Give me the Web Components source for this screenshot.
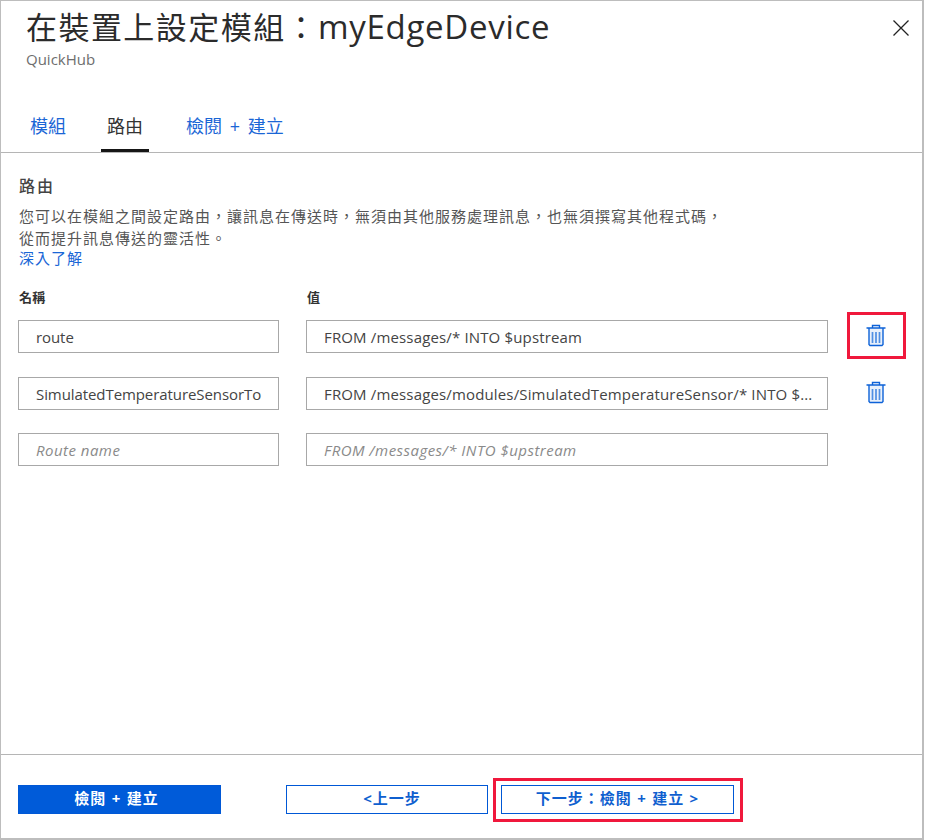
<!DOCTYPE html>
<html lang="zh-Hant"><head><meta charset="utf-8"><title>路由</title>
<style>
html,body{margin:0;padding:0;background:#fff}
body{font-family:"Open Sans","Noto Sans CJK TC",sans-serif;color:#333}
</style></head><body>
<route-panel>
  <panel-header slot="header" heading="在裝置上設定模組：myEdgeDevice" sub="QuickHub"></panel-header>
  <tab-bar slot="tabs">
    <tab-item>模組</tab-item><tab-item active>路由</tab-item><tab-item>檢閱 + 建立</tab-item>
  </tab-bar>
  <route-intro></route-intro>
  <route-table>
    <route-row name="route" value="FROM /messages/* INTO $upstream" highlight></route-row>
    <route-row name="SimulatedTemperatureSensorTo" value="FROM /messages/modules/SimulatedTemperatureSensor/* INTO $..."></route-row>
    <route-row name-ph="Route name" value-ph="FROM /messages/* INTO $upstream" empty></route-row>
  </route-table>
  <panel-footer slot="footer">
    <action-button kind="primary" w="203" style="padding-right:6px">檢閱 + 建立</action-button>
    <action-button w="202" style="margin-left:65px;padding-left:10px">&lt;上一步</action-button>
    <action-button w="233" highlight style="margin-left:13px">下一步：檢閱 + 建立 &gt;</action-button>
  </panel-footer>
</route-panel>
<script>
function def(name, html, init){
  customElements.define(name, class extends HTMLElement{
    connectedCallback(){
      if(this.shadowRoot) return;
      const r=this.attachShadow({mode:'open'});
      r.innerHTML=html;
      if(init) init(this,r);
    }
  });
}
const stack='"Open Sans","Noto Sans CJK TC",sans-serif';
def('route-panel',`<style>
:host{display:flex;flex-direction:column;box-sizing:border-box;width:924px;height:840px;border:1px solid #bdbdbd;border-width:1px 1px 2px 1px;border-right-width:2px;background:#fff;font-family:${stack}}
.body{flex:1;padding:0 0 0 17px;min-height:0}
</style><slot name="header"></slot><slot name="tabs"></slot><div class="body"><slot></slot></div><slot name="footer"></slot>`);

def('panel-header',`<style>
:host{display:block;position:relative;height:100px;box-sizing:border-box;padding:5px 0 0 25px}
h1{margin:0;font-weight:400;font-size:31px;line-height:42px;height:42px;letter-spacing:1.45px;color:#2b2b2b;white-space:nowrap}
.lat{letter-spacing:.7px;font-size:33px;font-weight:400}
p{margin:1px 0 0;font-size:15px;line-height:20px;color:#6e6e6e;letter-spacing:0}
button{position:absolute;right:12px;top:18px;width:18px;height:18px;padding:0;border:0;background:none;display:block}
svg{display:block}
</style><h1></h1><p></p><button aria-label="關閉"><svg width="18" height="18" viewBox="0 0 18 18"><path d="M1.5 1.5 16.5 16.5M16.5 1.5 1.5 16.5" stroke="#222" stroke-width="1.3" fill="none"/></svg></button>`,
(h,r)=>{const t=h.getAttribute('heading').split('：');
  r.querySelector('h1').innerHTML=t[0]+'：<span class="lat">'+t[1]+'</span>';
  r.querySelector('p').textContent=h.getAttribute('sub');});

def('tab-bar',`<style>
:host{display:flex;height:52px;box-sizing:border-box;border-bottom:1px solid #b5b5b5;padding-left:27px;gap:35px;align-items:stretch}
</style><slot></slot>`);

def('tab-item',`<style>
:host{display:block;box-sizing:border-box;height:51px;padding:13px 0 0 2px;font-size:18px;line-height:24px;color:#1a66d6;white-space:nowrap;border-bottom:3px solid transparent;word-spacing:3px}
:host([active]){color:#333;border-bottom-color:#161616;padding:13px 6px 0 6px}
</style><slot></slot>`);

def('route-intro',`<style>
:host{display:block;padding-top:22px;padding-left:1px;color:#444}
h2{margin:0;font-size:16px;line-height:22px;font-weight:500;letter-spacing:2px;color:#444}
p{margin:9px 0 0;font-size:15px;line-height:21.5px;letter-spacing:1px;color:#555}
a{display:block;margin-top:-1px;color:#1a66d6;font-size:15px;line-height:21px;letter-spacing:1px;text-decoration:none}
</style><h2>路由</h2><p>您可以在模組之間設定路由，讓訊息在傳送時，無須由其他服務處理訊息，也無須撰寫其他程式碼，<br>從而提升訊息傳送的靈活性。</p><a href="#">深入了解</a>`);

def('route-table',`<style>
:host{display:block;padding-top:19px}
.h{display:grid;grid-template-columns:261px 522px;column-gap:27px;height:32px;font-size:13px;line-height:18px;font-weight:700;color:#333;padding-left:1px;letter-spacing:.2px}
.rows{display:flex;flex-direction:column;gap:23px}
</style><div class="h"><span>名稱</span><span>值</span></div><div class="rows"><slot></slot></div>`);

def('route-row',`<style>
:host{display:grid;grid-template-columns:261px 522px 78px;column-gap:27px;height:33.5px;position:relative}
.f{box-sizing:border-box;height:33px;border:1px solid #a8a8a8;font-size:15px;line-height:33px;color:#444;white-space:nowrap;overflow:hidden;background:#fff}
.n{padding:0 8px 0 17px;letter-spacing:-.08px}
.v{padding:0 8px 0 17px;letter-spacing:.15px}
.f.ph{font-style:italic;color:#8a8a8a;letter-spacing:.47px}
.c{margin-left:-37px;display:flex;align-items:center;justify-content:center;height:32px}
.c svg{display:block}
.mark{position:absolute;box-sizing:border-box;left:829px;top:-8px;width:59px;height:47px;border:3px solid #f0183c}
</style><div class="f n"></div><div class="f v"></div><div class="c"></div>`,
(h,r)=>{const n=r.querySelector('.n'),v=r.querySelector('.v');
  if(h.hasAttribute('empty')){n.textContent=h.getAttribute('name-ph');v.textContent=h.getAttribute('value-ph');n.classList.add('ph');v.classList.add('ph');}
  else{n.textContent=h.getAttribute('name');v.textContent=h.getAttribute('value');
    r.querySelector('.c').innerHTML=`<svg width="20" height="24" viewBox="0 0 20 24" aria-label="刪除"><path d="M3 4H17V21.5H3Z" fill="#e8f0fb"/><path d="M.5 4H19.5M6.5 4V1.5H13.5V4M3 4V20.5L4 21.5H16L17 20.5V4" fill="none" stroke="#0d62d8" stroke-width="1.4"/><path d="M6.5 8V19M10 8V19M13.5 8V19" stroke="#4f8fe3" stroke-width="1.7" fill="none"/></svg>`;}
  if(h.hasAttribute('highlight')){const m=document.createElement('div');m.className='mark';r.appendChild(m);}
});

def('panel-footer',`<style>
:host{display:flex;height:84px;box-sizing:border-box;border-top:1px solid #b5b5b5;padding:30px 0 0 17px;align-items:flex-start}
</style><slot></slot>`);

def('action-button',`<style>
:host{display:block;position:relative;box-sizing:border-box;height:29px;border:1px solid #0058d6;color:#0f5fcf;background:#fff;font-size:15px;line-height:25px;font-weight:700;text-align:center;white-space:nowrap;letter-spacing:1px;word-spacing:.5px}
:host([kind=primary]){background:#005bd9;color:#fff}
.mark{position:absolute;left:-9px;top:-8px;right:-10px;bottom:-9px;border:3px solid #f0183c}
</style><slot></slot>`,
(h,r)=>{h.style.width=h.getAttribute('w')+'px';
  if(h.hasAttribute('highlight')){const m=document.createElement('div');m.className='mark';r.appendChild(m);}});
</script>
</body></html>
